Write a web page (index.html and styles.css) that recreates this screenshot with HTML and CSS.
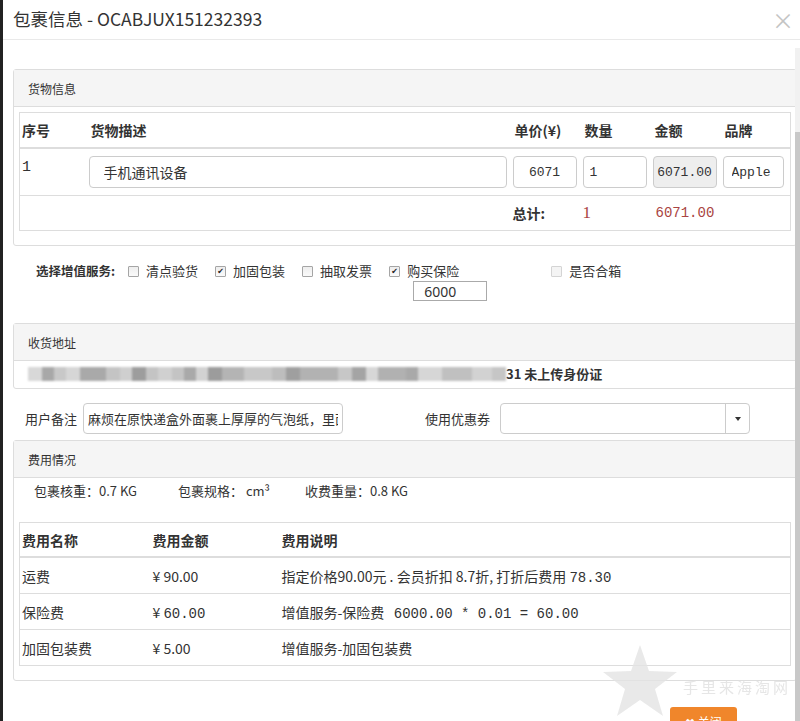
FILE: index.html
```html
<!DOCTYPE html>
<html>
<head>
    <title>包裹信息</title>
    <meta charset="UTF-8">
    <link rel="stylesheet" href="styles.css">
</head>
<body>
<div class="modal">
    <div class="modal-header">
        <h4>包裹信息 - OCABJUX151232393</h4>
        <span class="close">&times;</span>
    </div>

    <div class="modal-body">
        <!-- goods -->
        <div class="panel goods-panel">
            <div class="panel-heading">货物信息</div>
            <div class="panel-body">
                <table class="tbl goods-tbl">
                    <colgroup>
                        <col style="width:69px"><col><col style="width:70px"><col style="width:70px"><col style="width:70px"><col style="width:68px">
                    </colgroup>
                    <thead>
                        <tr><th>序号</th><th>货物描述</th><th>单价(¥)</th><th>数量</th><th>金额</th><th>品牌</th></tr>
                    </thead>
                    <tbody>
                        <tr class="item-row">
                            <td class="idx">1</td>
                            <td><input class="form-control desc" type="text" value="手机通讯设备"></td>
                            <td><input class="form-control mono center" type="text" value="6071"></td>
                            <td><input class="form-control mono" type="text" value="1"></td>
                            <td><input class="form-control mono center readonly" type="text" value="6071.00" readonly></td>
                            <td><input class="form-control mono brand" type="text" value="Apple"></td>
                        </tr>
                        <tr class="total-row">
                            <td></td><td></td>
                            <td class="total-label">总计:</td>
                            <td class="red count">1</td>
                            <td class="red mono sum">6071.00</td>
                            <td></td>
                        </tr>
                    </tbody>
                </table>
            </div>
        </div>

        <!-- extra services -->
        <div class="services">
            <span class="services-label">选择增值服务:</span>
            <label class="chk"><span class="cb"></span>清点验货</label>
            <label class="chk"><span class="cb on">✔</span>加固包装</label>
            <label class="chk"><span class="cb"></span>抽取发票</label>
            <span class="insure">
                <label class="chk"><span class="cb on">✔</span>购买保险</label>
                <input class="insure-amount" type="text" value="6000">
            </span>
            <label class="chk disabled"><span class="cb"></span>是否合箱</label>
        </div>

        <!-- address -->
        <div class="panel address-panel">
            <div class="panel-heading">收货地址</div>
            <div class="panel-body address">
                <span class="blurred">
                    <i style="width:14px;background:#d8d8d8"></i><i style="width:12px;background:#a8a8a8"></i><i style="width:12px;background:#c8c8c8"></i><i style="width:14px;background:#d6d6d6"></i><i style="width:26px;background:#a9a9a9"></i><i style="width:14px;background:#c4c4c4"></i><i style="width:12px;background:#cfcfcf"></i><i style="width:14px;background:#9d9d9d"></i><i style="width:12px;background:#c4c4c4"></i><i style="width:14px;background:#d0d0d0"></i><i style="width:12px;background:#c4c4c4"></i><i style="width:12px;background:#a9a9a9"></i><i style="width:12px;background:#d2d2d2"></i><i style="width:14px;background:#9c9c9c"></i><i style="width:22px;background:#b4b4b4"></i><i style="width:28px;background:#c8c8c8"></i><i style="width:14px;background:#bdbdbd"></i><i style="width:14px;background:#9f9f9f"></i><i style="width:38px;background:#b2b2b2"></i><i style="width:14px;background:#c7c7c7"></i><i style="width:14px;background:#a4a4a4"></i><i style="width:12px;background:#d7d7d7"></i><i style="width:28px;background:#b1b1b1"></i><i style="width:12px;background:#a9a9a9"></i><i style="width:24px;background:#d6d6d6"></i><i style="width:30px;background:#c0c0c0"></i><i style="width:20px;background:#d2d2d2"></i><i style="width:14px;background:#c6c6c6"></i>
                </span>
                <b>31 未上传身份证</b>
            </div>
        </div>

        <!-- remark / coupon -->
        <div class="form-row">
            <label class="form-label">用户备注</label>
            <input class="form-control remark" type="text" value="麻烦在原快递盒外面裹上厚厚的气泡纸，里面的东西不要拆开">
            <label class="form-label coupon-label">使用优惠券</label>
            <div class="select">
                <span class="select-value"></span>
                <span class="select-caret"></span>
            </div>
        </div>

        <!-- fees -->
        <div class="panel fee-panel">
            <div class="panel-heading">费用情况</div>
            <div class="panel-body">
                <div class="weights">
                    <span>包裹核重：0.7 KG</span>
                    <span>包裹规格： cm³</span>
                    <span>收费重量：0.8 KG</span>
                </div>
                <table class="tbl fee-tbl">
                    <colgroup><col style="width:131px"><col style="width:129px"><col></colgroup>
                    <thead>
                        <tr><th>费用名称</th><th>费用金额</th><th>费用说明</th></tr>
                    </thead>
                    <tbody>
                        <tr><td>运费</td><td>¥ 90.00</td><td>指定价格90.00元 . 会员折扣 8.7折, 打折后费用 <span class="mono">78.30</span></td></tr>
                        <tr><td>保险费</td><td>¥ <span class="mono">60.00</span></td><td>增值服务-保险费 &nbsp; <span class="mono">6000.00 * 0.01 = 60.00</span></td></tr>
                        <tr><td>加固包装费</td><td>¥ 5.00</td><td>增值服务-加固包装费</td></tr>
                    </tbody>
                </table>
            </div>
        </div>
    </div>

    <div class="modal-footer">
        <button class="btn-close">✖ 关闭</button>
    </div>

    <!-- site watermark -->
    <div class="watermark">
        <svg width="74" height="72" viewBox="0 0 74 72"><polygon points="37,0 46,26 74,27 52,44 60,71 37,55 14,71 22,44 0,27 28,26" fill="#e4e4e4"/></svg>
        <span>手里来海淘网</span>
    </div>

    <div class="scrollbar"><div class="thumb"></div></div>
</div>
</body>
</html>
```

FILE: styles.css
```css
body { margin: 0; background: #fff; font-family: "Noto Sans CJK SC", "Noto Sans", sans-serif; font-size: 13px; color: #333; }
.modal { position: relative; height: 721px; overflow: hidden; border-left: 3px solid #222; box-sizing: border-box; }

.modal-header { height: 40px; border-bottom: 1px solid #e9e9e9; padding: 0 10px; display: flex; align-items: center; justify-content: space-between; box-sizing: border-box; }
.modal-header h4 { margin: 0; font-size: 17.5px; font-weight: normal; color: #333; line-height: 1; margin-top: -2px; }
.close { font-size: 22px; color: #c4c4c4; line-height: 1; margin-right: -4px; margin-top: -2px; }

.modal-body { padding: 29px 3px 0 10px; }

.panel { border: 1px solid #ddd; border-radius: 3px; }
.panel-heading { background: #f5f5f5; border-bottom: 1px solid #ddd; height: 36px; padding: 0 14px; display: flex; align-items: center; font-size: 12px; color: #333; }
.panel-body { padding: 5px 5px 14px; }

.tbl { width: 100%; border-collapse: collapse; border: 1px solid #ddd; table-layout: fixed; }
.tbl th { text-align: left; font-weight: bold; font-size: 14px; padding: 0 2px; height: 34px; border-bottom: 2px solid #ddd; color: #333; }
.tbl td { padding: 0 2px; font-size: 14px; color: #333; }

.goods-tbl .item-row td { padding-top: 7px; padding-bottom: 7px; border-bottom: 1px solid #ddd; vertical-align: top; }
.goods-tbl .item-row td:nth-child(n+2) { padding-left: 0; padding-right: 6px; }
.goods-tbl .idx { font-family: "Liberation Mono", monospace; font-size: 15px; padding-top: 10px !important; }
.goods-tbl .total-row td { height: 34px; }
.total-label { font-weight: bold; padding-left: 0 !important; }
.red { color: #a94442 !important; }
.count { font-family: "Liberation Serif", serif; font-size: 17px !important; padding-left: 0 !important; }
.sum { padding-left: 3px !important; }

.form-control { box-sizing: border-box; width: 100%; height: 32px; border: 1px solid #ccc; border-radius: 4px; background: #fff; padding: 0 6px; font-size: 14px; color: #333; font-family: "Noto Sans CJK SC", sans-serif; outline: none; }
.form-control.desc { padding-left: 14px; }
.form-control.readonly { background: #eee; padding: 0; }
.form-control.brand { padding-left: 8px; }
.center { text-align: center; }
.mono { font-family: "Liberation Mono", "DejaVu Sans Mono", monospace; font-size: 14px; }
input.mono { font-size: 13px; }

.services { display: flex; align-items: flex-start; padding: 17px 0 0 23px; height: 77px; box-sizing: border-box; font-size: 13px; }
.services-label { font-weight: bold; font-size: 12.5px; line-height: 16px; margin-right: 13px; }
.chk { display: inline-flex; align-items: center; margin-right: 17px; line-height: 16px; color: #333; }
.cb { width: 9px; height: 9px; border: 1px solid #a5a5a5; border-radius: 1px; background: linear-gradient(#eee, #fafafa); margin-right: 7px; font-size: 8px; line-height: 9px; text-align: center; color: #222; font-family: "DejaVu Sans", sans-serif; }
.chk.disabled .cb { border-color: #d4d4d4; background: #f4f4f4; }
.insure { display: flex; flex-direction: column; width: 162px; }
.insure .chk { margin-right: 0; }
.insure-amount { width: 74px; height: 20px; box-sizing: border-box; margin: 2px 0 0 24px; border: 1px solid #aaa; font-family: "Noto Sans", sans-serif; font-size: 14px; padding: 0 10px; color: #333; }

.address { padding: 4px 14px 6px; display: flex; align-items: center; height: 17px; font-size: 13px; }
.blurred { display: inline-flex; height: 14px; filter: blur(1px); }
.blurred i { display: block; height: 14px; }
.address b { font-weight: bold; }

.form-row { display: flex; align-items: center; height: 31px; margin: 14px 0 6px; padding-left: 12px; }
.form-label { font-size: 13px; margin-right: 6px; }
.form-control.remark { width: 260px; height: 31px; padding: 0 4px; font-size: 13px; }
.coupon-label { margin-left: 82px; margin-right: 10px; }
.select { display: flex; width: 250px; height: 31px; border: 1px solid #ccc; border-radius: 4px; box-sizing: border-box; }
.select-value { flex: 1; }
.select-caret { width: 23px; border-left: 1px solid #ccc; position: relative; }
.select-caret::after { content: ""; position: absolute; left: 9px; top: 13px; border-left: 3px solid transparent; border-right: 3px solid transparent; border-top: 4px solid #333; }

.fee-panel .panel-body { padding-top: 3px; }
.weights { display: flex; padding: 0 0 0 15px; height: 41px; font-size: 13px; color: #333; }
.weights span:nth-child(1) { width: 144px; }
.weights span:nth-child(2) { width: 127px; }
.fee-tbl th { height: 33px; }
.fee-tbl td { height: 35px; border-top: 1px solid #ddd; font-size: 14px; }

.modal-footer { padding: 26px 0 0 667px; }
.btn-close { background: #f0862b; color: #fff; border: none; border-radius: 3px; width: 67px; height: 30px; font-size: 12px; font-family: "Noto Sans CJK SC", sans-serif; padding-top: 0; vertical-align: top; }

.watermark { position: absolute; left: 600px; top: 645px; display: flex; align-items: center; opacity: 0.8; }
.watermark span { font-family: "Noto Sans CJK SC", serif; font-size: 15px; color: #e0e0e0; letter-spacing: 3px; margin-left: 6px; margin-top: 10px; }

.scrollbar { position: absolute; right: 0; top: 48px; bottom: 0; width: 5px; background: #f1f1f1; }
.thumb { position: absolute; left: 0; right: 0; top: 84px; bottom: 0; background: #c8c8c8; }
```
